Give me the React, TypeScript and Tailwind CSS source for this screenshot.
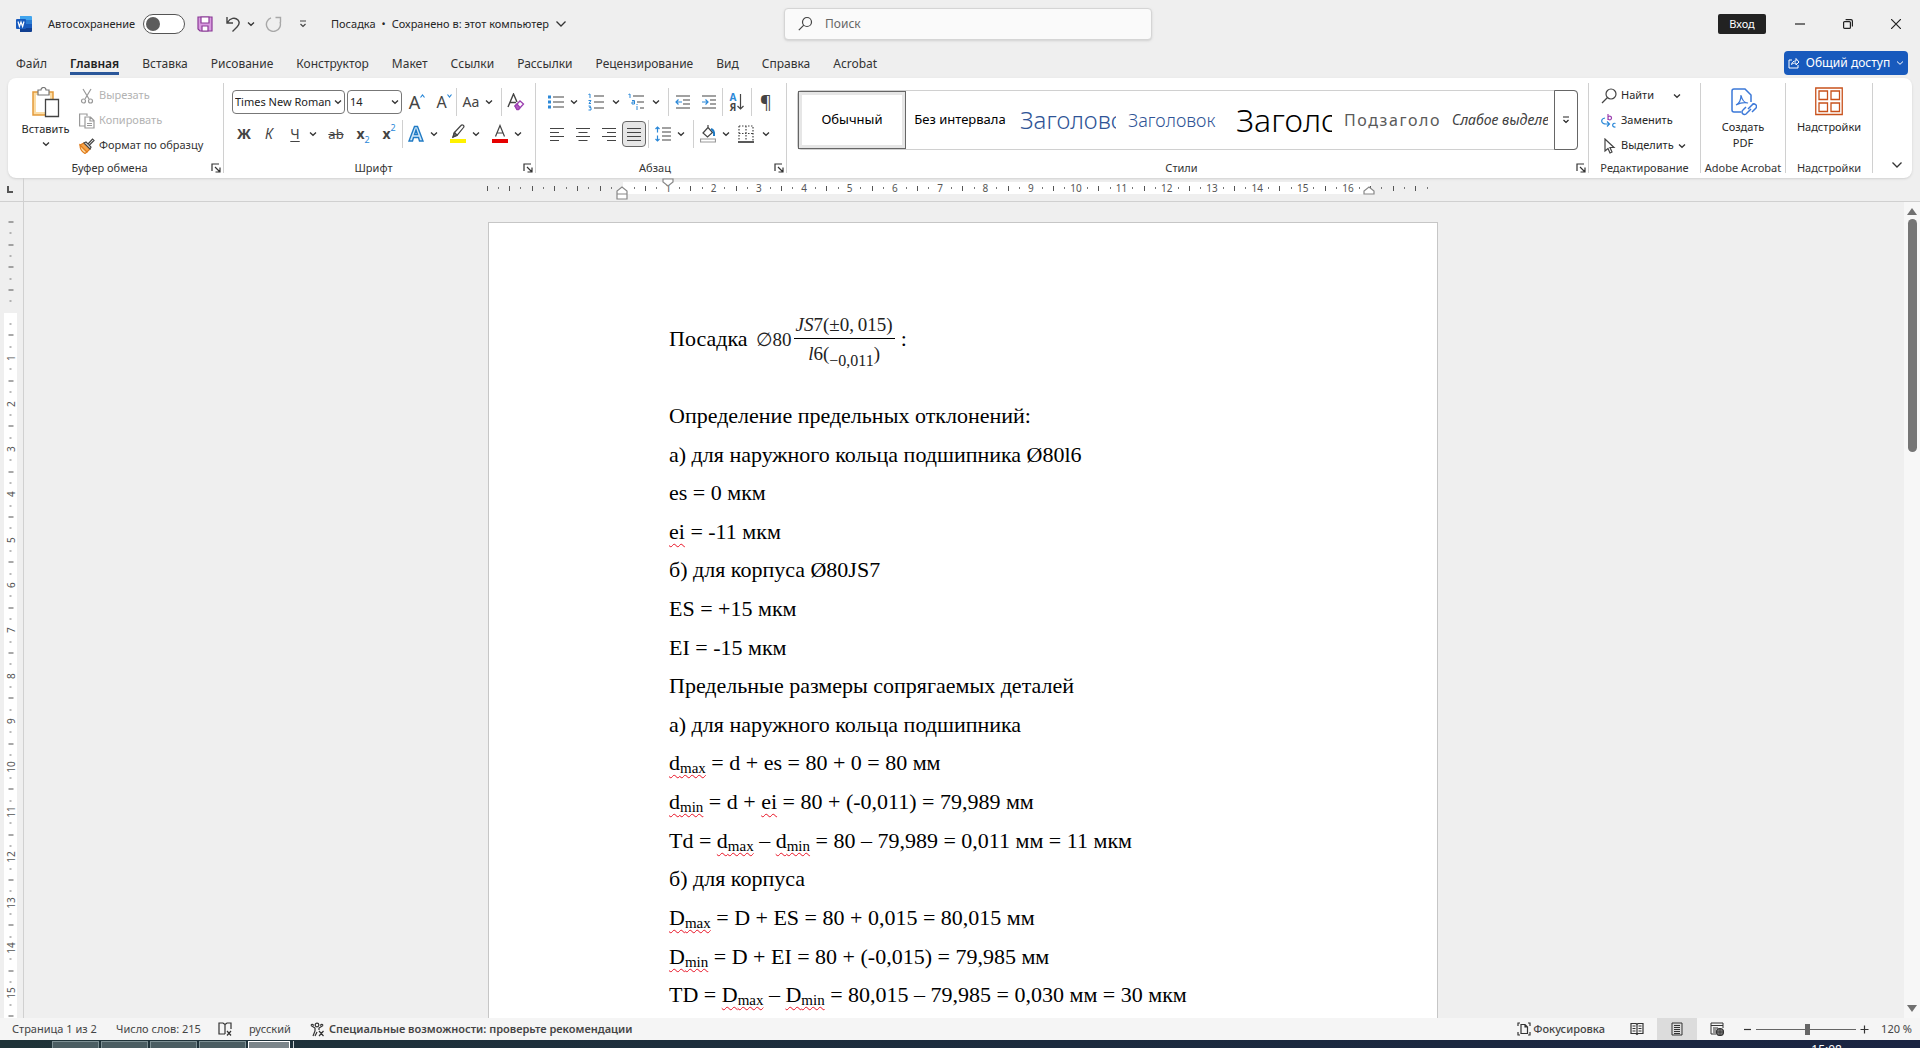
import { useState } from "react";
import type { ReactNode } from "react";

const TABS = [
  "Файл", "Главная", "Вставка", "Рисование", "Конструктор", "Макет", "Ссылки",
  "Рассылки", "Рецензирование", "Вид", "Справка", "Acrobat",
];

const STYLES = [
  { id: "normal", name: "Обычный", cls: "text-[13px] text-black justify-center" },
  { id: "nospace", name: "Без интервала", cls: "text-[13px] text-black justify-center" },
  { id: "h1", name: "Заголовок", cls: "text-2xl font-light text-[#2f5496]" },
  { id: "h2", name: "Заголовок", cls: "text-lg font-light text-[#2f5496]" },
  { id: "title", name: "Заголовок", cls: "text-[32px] font-light text-black" },
  { id: "subtitle", name: "Подзаголовок", cls: "text-base tracking-widest text-[#5a5a5a]" },
  { id: "subtle", name: "Слабое выделение", cls: "text-sm italic text-[#404040]" },
];

/* ── small shared pieces ── */

function Icon({ w = 16, h = 16, children }: { w?: number; h?: number; children: ReactNode }) {
  return (
    <svg width={w} height={h} viewBox={`0 0 ${w} ${h}`} fill="none" stroke="#444" strokeWidth="1.2" className="shrink-0" aria-hidden>
      {children}
    </svg>
  );
}

function Chevron({ big = false }: { big?: boolean }) {
  return big ? (
    <Icon w={12} h={8}><path d="M1.5 1.5 6 6l4.500-4.500" stroke="#333" strokeWidth="1.300" /></Icon>
  ) : (
    <Icon w={8} h={6}><path d="M1 1.500 4 4.300l3-2.800" stroke="#333" strokeWidth="1.300" /></Icon>
  );
}

function Tool({ label, w, children }: { label: string; w: string; children: ReactNode }) {
  return (
    <button aria-label={label} className={`flex h-6 shrink-0 items-center justify-center ${w}`}>
      {children}
    </button>
  );
}

const More = ({ w }: { w: string }) => <Tool label="Ещё" w={w}><Chevron /></Tool>;

const Sep = () => <span className="h-7 w-px shrink-0 bg-[#d0d0d0]" />;

function Group({ title, width, launcher, children }: { title: string; width: string; launcher?: boolean; children: ReactNode }) {
  return (
    <section aria-label={title} className={`flex flex-col justify-between border-r border-[#d0d0d0] ${width}`}>
      {children}
      <div className="flex h-[11px] items-center">
        <span className="grow whitespace-nowrap text-center text-[11px] leading-3 text-[#333]">{title}</span>
        {launcher && (
          <button aria-label={`Параметры: ${title}`} className="mr-0.5">
            <Icon w={10} h={10}><path d="M1 8V1h7M4 4l4.500 4.500M9 4.500V9H4.500" stroke="#333" /></Icon>
          </button>
        )}
      </div>
    </section>
  );
}

/* ── title bar ── */

function TitleBar() {
  return (
    <header className="grid h-12 shrink-0 grid-cols-[1fr_368px_1fr] items-center pl-4 text-[11px] text-[#262626]">
      <div className="flex items-center">
        <Icon>
          <path d="M4 0h11a1 1 0 0 1 1 1v4H4z" fill="#41a5ee" stroke="none" />
          <path d="M4 4h12v4H4z" fill="#2b7cd3" stroke="none" />
          <path d="M4 8h12v4H4z" fill="#185abd" stroke="none" />
          <path d="M4 12h12v3a1 1 0 0 1-1 1H4z" fill="#103f91" stroke="none" />
          <rect y="3" width="10" height="10" rx="1" fill="#185abd" stroke="none" />
          <path d="m2 5.500 1.400 5L5 6l1.600 4.500L8 5.500" stroke="#fff" />
        </Icon>
        <label htmlFor="autosave" className="ml-4 w-[95px]">Автосохранение</label>
        <span className="relative flex h-5 w-[42px] rounded-full border border-[#555] bg-white">
          <input id="autosave" type="checkbox" role="switch" className="absolute inset-0 appearance-none" />
          <span className="m-0.5 size-3.5 rounded-full bg-[#5c5c5c]" />
        </span>
        <button aria-label="Сохранить" className="ml-3">
          <Icon>
            <path d="M1 1h14v14H3l-2-2z" fill="#d99be0" stroke="#8a3a96" />
            <path d="M4 1h8v6H4zM5 10h6v5H5z" fill="#fff" stroke="#8a3a96" />
          </Icon>
        </button>
        <button aria-label="Отменить" className="ml-3 flex items-center gap-1.5">
          <Icon><path d="M2 1v6h6M2.500 6.500C5 2 10 1 13 4c2.500 3 1 5-1 7l-4.500 4.500" strokeWidth="1.400" /></Icon>
          <Chevron />
        </button>
        <button aria-label="Повторить" className="ml-2.5">
          <Icon w={18}><path d="M10.500 1.500h5v5M15 6A7 7 0 1 1 6 1.800" stroke="#a8a8a8" strokeWidth="1.400" /></Icon>
        </button>
        <button aria-label="Настройка панели" className="ml-4">
          <Icon w={8} h={8}><path d="M1 1h6M1.500 4 4 6.500 6.500 4" /></Icon>
        </button>
        <button className="ml-6 flex items-center gap-1.5 whitespace-nowrap">
          <span>Посадка</span><span>•</span><span>Сохранено в: этот компьютер</span> <Chevron big />
        </button>
      </div>
      <label className="flex h-8 items-center gap-3 rounded-sm border border-[#d5d5d5] bg-[#fafafa] px-3 shadow-sm">
        <Icon><circle cx="10" cy="6" r="4.500" /><path d="m6.800 9.200-5 5" /></Icon>
        <input aria-label="Поиск" placeholder="Поиск" className="grow bg-transparent text-xs outline-none placeholder:text-[#666]" />
      </label>
      <div className="flex items-center justify-end">
        <button className="mr-2.5 h-5 w-12 rounded-xs bg-[#222] text-[11px] text-white">Вход</button>
        <button aria-label="Свернуть" className="flex w-12 justify-center"><Icon w={10} h={10}><path d="M0 5h10" stroke="#222" /></Icon></button>
        <button aria-label="Развернуть" className="flex w-12 justify-center">
          <Icon w={10} h={10}><rect x=".6" y="2.600" width="6.800" height="6.800" rx="1" stroke="#222" /><path d="M2.600.600H8A1.500 1.500 0 0 1 9.400 2v5.400" stroke="#222" /></Icon>
        </button>
        <button aria-label="Закрыть" className="flex w-12 justify-center"><Icon w={10} h={10}><path d="m0 0 10 10M10 0 0 10" stroke="#222" /></Icon></button>
      </div>
    </header>
  );
}

function TabBar() {
  const [active, setActive] = useState("Главная");
  return (
    <nav className="flex h-[30px] shrink-0 items-start justify-between pl-[5px] pr-3">
      <div className="flex gap-px">
        {TABS.map((t) => (
          <button key={t} onClick={() => setActive(t)} className="px-[11px] pt-1 text-xs text-[#333]">
            <span className={`block h-[23px] leading-[23px] ${t === active ? "border-b-[3px] border-[#2b579a] font-semibold text-[#222]" : ""}`}>{t}</span>
          </button>
        ))}
      </div>
      <button className="mt-[3px] flex h-6 w-[124px] items-center justify-center gap-1.5 rounded-sm bg-[#185abd] text-xs text-white">
        <Icon w={12} h={12}><path d="M4 3H1v8h9V8M3.500 7.500C4 5 5.500 4 8 4V1.500L11 5 8 8V6C6 6 4.500 6.500 3.500 7.500z" stroke="#fff" strokeWidth="1" /></Icon>
        Общий доступ
        <svg width="8" height="6" viewBox="0 0 8 6" fill="none" stroke="#fff"><path d="m1 1.500 3 2.800 3-2.800" /></svg>
      </button>
    </nav>
  );
}

/* ── ribbon groups ── */

function Clipboard() {
  return (
    <Group title="Буфер обмена" width="w-[216px]" launcher>
      <div className="flex">
        <button className="flex w-[71px] flex-col items-center pl-1 pt-1 text-[11px]">
          <Icon w={30} h={32}>
            <path d="M2 5h20v23H2z" fill="#fbdca5" stroke="#e39a3b" strokeWidth="1.500" />
            <path d="M5 8h14v17H5z" fill="#fff" stroke="none" />
            <path d="M7 3h3a2.500 2.500 0 0 1 5 0h3v5H7z" fill="#fff" stroke="#777" />
            <path d="M14.500 12.500h13v17h-13z" fill="#fff" stroke="#444" strokeWidth="1.300" />
          </Icon>
          <span className="leading-5">Вставить</span>
          <span className="mt-0.5"><Chevron /></span>
        </button>
        <div className="flex flex-col text-[11px]">
          <button disabled className="flex h-[25px] items-center gap-1 text-[#b3b3b3]">
            <Icon><path d="m4 1 6 10M12 1 6 11" stroke="#999" /><circle cx="4.500" cy="13" r="2" stroke="#999" /><circle cx="11.500" cy="13" r="2" stroke="#999" /></Icon>
            Вырезать
          </button>
          <button disabled className="flex h-[25px] items-center gap-1 text-[#b3b3b3]">
            <Icon><path d="M6 13H.600V1H8v2M6 4h5.500l3.500 3.500V15H6zM11 4v4h4M8 10.500h5M8 12.500h5" stroke="#999" /></Icon>
            Копировать
          </button>
          <button className="flex h-[25px] items-center gap-1 text-[#333]">
            <Icon>
              <path d="m1 7 7 7-2 1.500C3 14 1 11 1 7z" fill="#fbdca5" stroke="#e07b1a" />
              <path d="m1 7 4-2 6 6-3 3z" fill="#f6a34a" stroke="#e07b1a" />
              <path d="m5 5 2-1 5 5-1 2zM9 6l4.500-5L15 2.500 10.500 7" fill="#fff" />
            </Icon>
            Формат по образцу
          </button>
        </div>
      </div>
    </Group>
  );
}

function Combo({ label, value, width }: { label: string; value: string; width: string }) {
  return (
    <span className={`relative flex h-6 items-center rounded-sm border border-[#777] bg-white ${width}`}>
      <select aria-label={label} className="w-full appearance-none overflow-hidden bg-transparent pl-0.5 pr-3 text-[11px] text-[#222] outline-none">
        <option>{value}</option>
      </select>
      <span className="pointer-events-none absolute right-0.5"><Chevron /></span>
    </span>
  );
}

function FontGroup() {
  return (
    <Group title="Шрифт" width="w-[312px]" launcher>
      <div className="flex flex-col gap-1 pl-2 pt-[5px] text-[#444]">
        <div className="flex h-7 items-center">
          <Combo label="Шрифт" value="Times New Roman" width="w-[113px]" />
          <span className="w-0.5" />
          <Combo label="Размер" value="14" width="w-[55px]" />
          <Tool label="Увеличить" w="w-[30px]"><span className="text-lg">A</span><span className="mb-3"><Icon w={5} h={4}><path d="m.500 3.500 2-2.500 2 2.500" stroke="#2b88d8" /></Icon></span></Tool>
          <Tool label="Уменьшить" w="w-6"><span className="text-base">A</span><span className="mb-3"><Icon w={5} h={4}><path d="m.500.500 2 2.500 2-2.500" stroke="#2b88d8" /></Icon></span></Tool>
          <Sep />
          <Tool label="Регистр" w="w-7"><span className="text-sm">Aa</span></Tool>
          <More w="w-2" />
          <span className="w-2" />
          <Sep />
          <Tool label="Очистить формат" w="w-[27px]">
            <Icon w={18} h={18}>
              <path d="m1 14 5.500-13L10 9M3 9.500h6" strokeWidth="1.400" />
              <path d="m8 13 5-5 3.500 3-5 5.500h-1.500z" fill="#fff" stroke="#9b3fb0" strokeWidth="1.300" />
              <path d="m8 13 2-2 3 3.500-1.500 2h-1.500z" fill="#b55cc6" stroke="#9b3fb0" />
            </Icon>
          </Tool>
        </div>
        <div className="flex h-7 items-center text-sm">
          <Tool label="Полужирный" w="w-6"><b>Ж</b></Tool>
          <Tool label="Курсив" w="w-[26px]"><i>К</i></Tool>
          <Tool label="Подчёркнутый" w="w-[26px]"><u className="underline-offset-2">Ч</u></Tool>
          <More w="w-[10px]" />
          <span className="w-1" />
          <Tool label="Зачёркнутый" w="w-7"><s className="text-[13px]">ab</s></Tool>
          <Tool label="Подстрочный" w="w-[26px]"><b>x</b><span className="mt-3 text-[9px] text-[#2b88d8]">2</span></Tool>
          <Tool label="Надстрочный" w="w-[26px]"><b>x</b><span className="mb-3 text-[9px] text-[#2b88d8]">2</span></Tool>
          <Sep />
          <Tool label="Эффекты" w="w-[26px]">
            <Icon w={16} h={18}><path d="M1 16 6.500 1.500h3L15 16h-3.500l-1-3.500h-5l-1 3.500zM6.500 9.500h3L8 5z" fill="#cfe6f8" stroke="#1f7ac4" strokeWidth="1.400" /></Icon>
          </Tool>
          <More w="w-[10px]" />
          <span className="w-1.5" />
          <Tool label="Цвет выделения" w="w-[26px]">
            <Icon w={16} h={20}><path d="m4 9 7-7.500a1.500 1.500 0 0 1 2.500 2L7 11.500 3 13z" /><path d="M4.500 8.500 7 11l-4 2z" fill="#777" /><path d="M0 15h16v4H0z" fill="#fff200" stroke="none" /></Icon>
          </Tool>
          <More w="w-[10px]" />
          <span className="w-1.5" />
          <Tool label="Цвет текста" w="w-[26px]">
            <Icon w={16} h={20}><path d="M3.500 12.500 8 1.500l4.500 11M5 9h6" /><path d="M0 15h16v4H0z" fill="#e60000" stroke="none" /></Icon>
          </Tool>
          <More w="w-[10px]" />
        </div>
      </div>
    </Group>
  );
}

const ALIGN = [
  { label: "По левому краю", d: "M0 1.500h14M0 5.500h9M0 9.500h14M0 13.500h9" },
  { label: "По центру", d: "M0 1.500h14M2.500 5.500h9M0 9.500h14M2.500 13.500h9" },
  { label: "По правому краю", d: "M0 1.500h14M5 5.500h9M0 9.500h14M5 13.500h9" },
];

function Paragraph() {
  return (
    <Group title="Абзац" width="w-[251px]" launcher>
      <div className="flex flex-col gap-1 pl-2 pt-[5px]">
        <div className="flex h-7 items-center">
          <Tool label="Маркеры" w="w-6">
            <Icon><path d="M5 3h11M5 8h11M5 13h11" /><path d="M0 1.500h3v3H0zM0 6.500h3v3H0zM0 11.500h3v3H0z" fill="#2b88d8" stroke="none" /></Icon>
          </Tool>
          <More w="w-3" />
          <Tool label="Нумерация" w="w-8">
            <Icon h={18}><path d="M6 3h10M6 9h10M6 15h10" /><path d="M.500 1.500 2 1v4M.500 7.500H3L1 10.500h2M.500 13h2l-1 1.500h1.500V17H.500" stroke="#2b88d8" strokeWidth="1" /></Icon>
          </Tool>
          <More w="w-2" />
          <Tool label="Многоуровневый список" w="w-8">
            <Icon h={18}><path d="M5 3h11M9 9h7M12 15h4" /><path d="M.500 1.500 2 1v4M4 7.500h2.500V11H4V9h2.500M9 13v4M9 11v1" stroke="#2b88d8" strokeWidth="1" /></Icon>
          </Tool>
          <More w="w-2" />
          <span className="w-2" />
          <Sep />
          <Tool label="Уменьшить отступ" w="w-7">
            <Icon><path d="M1 2h14M8 6h7M8 10h7M1 14h14" /><path d="M7 8H1M3.500 5.500 1 8l2.500 2.500" stroke="#2b88d8" /></Icon>
          </Tool>
          <Tool label="Увеличить отступ" w="w-6">
            <Icon><path d="M1 2h14M9 6h6M9 10h6M1 14h14" /><path d="M1 8h6M4.500 5.500 7 8l-2.500 2.500" stroke="#2b88d8" /></Icon>
          </Tool>
          <span className="w-px" />
          <Sep />
          <Tool label="Сортировка" w="w-7">
            <span className="flex flex-col text-[10px] font-bold leading-[10px] text-[#444]"><span className="text-[#2b88d8]">А</span>Я</span>
            <Icon w={8} h={18}><path d="M4.500 1v15M1.500 13l3 3 3-3" /></Icon>
          </Tool>
          <Sep />
          <Tool label="Знаки абзаца" w="w-7"><span className="text-lg text-[#444]">¶</span></Tool>
        </div>
        <div className="flex h-7 items-center">
          {ALIGN.map((a) => (
            <Tool key={a.label} label={a.label} w="w-[26px]"><Icon w={14} h={15}><path d={a.d} /></Icon></Tool>
          ))}
          <span className="flex rounded-sm border border-[#666] bg-[#e6e6e6]">
            <Tool label="По ширине" w="w-[22px]"><Icon w={14} h={15}><path d="M0 1.500h14M0 5.500h14M0 9.500h14M0 13.500h14" /></Icon></Tool>
          </span>
          <span className="w-0.5" />
          <Sep />
          <Tool label="Интервал" w="w-7">
            <Icon><path d="M7 2h9M7 6h9M7 10h9M7 14h9" /><path d="M2.500 1v5.500M.500 3l2-2 2 2M2.500 15V9.500M.500 13l2 2 2-2" stroke="#2b88d8" /></Icon>
          </Tool>
          <More w="w-2" />
          <span className="w-2" />
          <Sep />
          <Tool label="Заливка" w="w-7">
            <Icon h={18}><path d="m3 8 5-5.500 4.500 5L7.500 12zM8 2.500V0" /><path d="M11 4c3 1 3.500 3 3 7" stroke="#1f7ac4" strokeWidth="2" /><path d="M.500 14h15v3H.500z" stroke="#999" /></Icon>
          </Tool>
          <More w="w-2" />
          <Tool label="Границы" w="w-8">
            <Icon h={18}><path d="M1 1h14v15M1 1v15M8 1v15M1 8.500h14" strokeDasharray="1.500 1.500" /><path d="M0 17h16" stroke="#222" strokeWidth="1.500" /></Icon>
          </Tool>
          <More w="w-2" />
        </div>
      </div>
    </Group>
  );
}

function StylesGroup() {
  const [sel, setSel] = useState("normal");
  return (
    <Group title="Стили" width="min-w-0 grow" launcher>
      <div className="mx-[10px] mt-[7px] flex h-[60px] rounded-sm border border-[#d0d0d0]">
        <div className="flex min-w-0 grow overflow-hidden">
          {STYLES.map((s) => (
            <button
              key={s.id}
              onClick={() => setSel(s.id)}
              className={`flex w-[108px] shrink-0 items-center justify-center ${s.id === sel ? "border border-[#666] shadow-[inset_0_0_0_3px_#e6e6e6]" : ""}`}
            >
              <span className={`flex w-24 overflow-hidden whitespace-nowrap ${s.cls}`}>{s.name}</span>
            </button>
          ))}
        </div>
        <button aria-label="Дополнительные стили" className="-my-px -mr-px flex w-6 items-center justify-center rounded-r-sm border border-[#666]">
          <Icon w={8} h={8}><path d="M1 1h6M1.500 4 4 6.500 6.500 4" stroke="#222" /></Icon>
        </button>
      </div>
    </Group>
  );
}

function Ribbon() {
  return (
    <div className="mx-2 flex h-[100px] shrink-0 rounded-lg bg-white py-[5px] text-[#262626] shadow-sm">
      <Clipboard />
      <FontGroup />
      <Paragraph />
      <StylesGroup />
      <Group title="Редактирование" width="w-[112px]">
        <div className="flex flex-col pl-3 text-[11px]">
          <button className="flex h-[25px] items-center gap-1">
            <Icon><circle cx="10" cy="6" r="5" /><path d="M6.500 9.500 1 15" /></Icon>
            <span className="w-12 text-left">Найти</span><Chevron />
          </button>
          <button className="flex h-[25px] items-center gap-1">
            <Icon><path d="M7 1v6M7 4.500a1.800 1.800 0 1 1 0 1" stroke="#9b3fb0" /><path d="M14.500 10.500c-3-1.500-4.500 4 0 3.500" stroke="#2b88d8" /><path d="M4 5c-5 1-4 6 1 6h3M6 8.500 8.500 11 6 13.500" stroke="#2b88d8" /></Icon>
            Заменить
          </button>
          <button className="flex h-[25px] items-center gap-1">
            <Icon><path d="M4 1v12l3-2.500 2 4.500 2-1-2-4.500h4z" /></Icon>
            Выделить <Chevron />
          </button>
        </div>
      </Group>
      <Group title="Adobe Acrobat" width="w-[85px]">
        <button className="flex flex-col items-center pt-1 text-[11px] leading-4">
          <Icon w={28} h={32}>
            <path d="M12 25H5a2 2 0 0 1-2-2V4a2 2 0 0 1 2-2h11l6 6v7" stroke="#3b78d8" strokeWidth="1.500" />
            <path d="M7 18c4-2 5-6 5-10 1 5 3 8 7 8-4-1-8 0-12 2z" stroke="#3b78d8" />
            <path d="m19 22 4-4a2.500 2.500 0 0 1 4 3l-4 4M22 22l-5 5a2.500 2.500 0 0 1-3-4l3-3" stroke="#3b78d8" strokeWidth="1.500" />
          </Icon>
          <span>Создать<br />PDF</span>
        </button>
      </Group>
      <Group title="Надстройки" width="w-[87px]">
        <button className="flex flex-col items-center pt-1 text-[11px] leading-4">
          <Icon w={28} h={32}>
            <path d="M.750 1h26.500v26.500H.750z" stroke="#c8511b" strokeWidth="1.300" />
            <path d="M4 4h8.500v8.500H4zM16 4h8.500v8.500H16zM4 16h8.500v8.500H4zM16 16h8.500v8.500H16z" stroke="#c8511b" strokeWidth="1.300" />
          </Icon>
          <span>Надстройки</span>
        </button>
      </Group>
      <button aria-label="Свернуть ленту" className="flex w-[39px] items-end justify-center pb-1 pl-2"><Chevron big /></button>
    </div>
  );
}

/* ── rulers: four cells per centimetre, mark on the leading edge of each cell ── */

function Mark({ quarter }: { quarter: number }) {
  const n = quarter / 4;
  if (quarter > 0 && quarter < 66 && quarter % 4 === 0) return <>{n}</>;
  if (quarter === 0) return null;
  return <span className={`w-px shrink-0 ${quarter % 2 === 0 ? "h-[5px] bg-[#555]" : "h-0.5 bg-[#777]"}`} />;
}

function HRuler() {
  const cells = Array.from({ length: 84 }, (_, i) => i - 12);
  return (
    <div className="flex h-6 shrink-0 border-b border-[#d0d0d0] text-[10px] text-[#555]">
      <div className="flex w-6 shrink-0 justify-center border-r border-[#d0d0d0] pr-1 pt-2">
        <Icon w={6} h={7}><path d="M1 0v6h5" stroke="#555" strokeWidth="2" /></Icon>
      </div>
      <div className="flex grow justify-center pr-[18px]">
        <div className="relative mt-1 flex h-3 w-[952px]">
          {cells.map((q) => (
            <span key={q} className={`flex flex-1 ${q >= 0 && q < 66 ? "bg-white" : ""}`}>
              <span className="flex w-0 items-center justify-center"><Mark quarter={q} /></span>
            </span>
          ))}
          <span className="absolute left-[129px] top-1"><Icon w={12} h={15}><path d="M1 8V5l5-4 5 4v3zM1 8h10v5H1z" fill="#fff" stroke="#888" /></Icon></span>
          <span className="absolute -top-1 left-[175px]"><Icon w={12} h={9}><path d="M1 1h10v3L6 8 1 4z" fill="#fff" stroke="#888" /></Icon></span>
          <span className="absolute left-[876px] top-1"><Icon w={12} h={9}><path d="M1 8V5l5-4 5 4v3z" fill="#fff" stroke="#888" /></Icon></span>
        </div>
      </div>
    </div>
  );
}

function VRuler() {
  const cells = Array.from({ length: 71 }, (_, i) => i - 8);
  return (
    <div className="w-6 shrink-0 overflow-hidden border-r border-[#d0d0d0] pl-1 pt-5 text-[10px] text-[#555]">
      <div className="flex h-[805px] w-[13px] flex-col">
        {cells.map((q) => (
          <span key={q} className={`flex flex-1 flex-col ${q >= 0 ? "bg-white" : ""}`}>
            <span className="flex h-0 -rotate-90 items-center justify-center"><Mark quarter={q} /></span>
          </span>
        ))}
      </div>
    </div>
  );
}

/* ── document ── */

const Err = ({ children }: { children: ReactNode }) => (
  <span className="underline decoration-[#e81123] decoration-wavy decoration-1 underline-offset-4">{children}</span>
);

const V = ({ s, i }: { s: string; i: string }) => (
  <Err>{s}<sub className="bottom-0 align-[-3px] text-[15px] leading-none">{i}</sub></Err>
);

function Page() {
  return (
    <article className="h-full w-[950px] shrink-0 overflow-hidden border border-b-0 border-[#c6c6c6] bg-white pl-[180px] pt-[87px] font-['Liberation_Serif','Times_New_Roman',serif] text-[22px] leading-[1.755] text-black">
      <div className="mb-[29px] flex h-[58px] items-center">
        Посадка
        <span className="ml-2 flex items-center gap-0.5 text-[19px] leading-none text-[#222]">
          <span>∅80</span>
          <span className="flex flex-col items-center">
            <span className="flex h-7 items-center border-b border-black px-0.5"><i>JS</i>7(±0,&#8201;015)</span>
            <span className="flex h-7 items-center"><i>l</i>6(<sub className="bottom-0 mt-4 text-base leading-none">−0,011</sub>)</span>
          </span>
        </span>
        <span className="ml-1.5">:</span>
      </div>
      <p>Определение предельных отклонений:</p>
      <p>а) для наружного кольца подшипника Ø80l6</p>
      <p>es = 0 мкм</p>
      <p><Err>ei</Err> = -11 мкм</p>
      <p>б) для корпуса Ø80JS7</p>
      <p>ES = +15 мкм</p>
      <p>EI = -15 мкм</p>
      <p>Предельные размеры сопрягаемых деталей</p>
      <p>а) для наружного кольца подшипника</p>
      <p><V s="d" i="max" /> = d + es = 80 + 0 = 80 мм</p>
      <p><V s="d" i="min" /> = d + <Err>ei</Err> = 80 + (-0,011) = 79,989 мм</p>
      <p>Td = <V s="d" i="max" /> – <V s="d" i="min" /> = 80 – 79,989 = 0,011 мм = 11 мкм</p>
      <p>б) для корпуса</p>
      <p><V s="D" i="max" /> = D + ES = 80 + 0,015 = 80,015 мм</p>
      <p><V s="D" i="min" /> = D + EI = 80 + (-0,015) = 79,985 мм</p>
      <p>TD = <V s="D" i="max" /> – <V s="D" i="min" /> = 80,015 – 79,985 = 0,030 мм = 30 мкм</p>
    </article>
  );
}

function StatusBar() {
  const [zoom, setZoom] = useState(52);
  return (
    <footer className="flex h-[22px] shrink-0 items-center bg-[#f5f5f5] pl-3 pr-2 text-[11px] text-[#444]">
      <span className="w-[104px] whitespace-nowrap">Страница 1 из 2</span>
      <span className="w-[102px] whitespace-nowrap">Число слов: 215</span>
      <Icon w={14} h={14}><path d="M7 12H1V1h4l2 1.500V12M7 2.500 9 1h4v6M9 9l4 4.500M13 9l-4 4.500" stroke="#333" /></Icon>
      <span className="ml-[17px] w-[61px]">русский</span>
      <Icon w={15} h={15}><circle cx="7" cy="3" r="1.800" stroke="#333" /><path d="M1 3.500 5 6v3l-2 5M13 3.500 9 6v2M1 3.500c.500-2 2-1 3 0M13 3.500c-.500-2-2-1-3 0M9 9l4.500 5M13.500 9 9 14M5 14l2-4" stroke="#333" /></Icon>
      <span className="ml-1 whitespace-nowrap font-semibold">Специальные возможности: проверьте рекомендации</span>
      <div className="ml-auto flex items-center self-stretch">
        <button className="mr-3 flex items-center gap-0.5 font-medium">
          <Icon w={14} h={14}><path d="M1 4V1h2M11 1h2v3M13 10v3h-2M3 13H1v-3M4 2.500h4L10.500 5v6.500H4zM8 2.500V5h2.500" stroke="#333" /></Icon>
          Фокусировка
        </button>
        <button aria-label="Режим чтения" className="flex w-10 justify-center">
          <Icon w={14} h={14}><path d="M7 2.500 6 1.500H1v10h5l1 1 1-1h5v-10H8zV12.500M2.500 4h3M2.500 6.500h3M2.500 9h3M8.500 4h3M8.500 6.500h3M8.500 9h3" stroke="#333" /></Icon>
        </button>
        <button aria-label="Разметка страницы" className="flex w-10 items-center justify-center self-stretch bg-[#dcdcdc]">
          <Icon w={12} h={14}><path d="M1 1h10v12H1zM3 3.500h6M3 5.500h6M3 7.500h6M3 9.500h6M3 11.500h6" stroke="#333" strokeWidth="1" /></Icon>
        </button>
        <button aria-label="Веб-документ" className="flex w-10 justify-center">
          <Icon w={14} h={14}><path d="M6 12H1V1h12v5M1 3.500h12M3 6h5M3 8h3M3 10h3" stroke="#333" strokeWidth="1" /><circle cx="10" cy="10" r="3.500" fill="#777" stroke="#333" /><path d="M6.500 10h7M10 6.500v7" stroke="#333" strokeWidth=".800" /></Icon>
        </button>
        <button aria-label="Уменьшить масштаб" className="ml-1.5 mr-1"><Icon w={9} h={9}><path d="M1 4.500h7" stroke="#333" /></Icon></button>
        <input
          type="range"
          aria-label="Масштаб"
          value={zoom}
          onChange={(e) => setZoom(Number(e.target.value))}
          className="h-3 w-[100px] appearance-none bg-transparent [&::-webkit-slider-runnable-track]:h-px [&::-webkit-slider-runnable-track]:bg-[#666] [&::-webkit-slider-thumb]:-mt-[5px] [&::-webkit-slider-thumb]:h-[11px] [&::-webkit-slider-thumb]:w-[5px] [&::-webkit-slider-thumb]:appearance-none [&::-webkit-slider-thumb]:bg-[#666]"
        />
        <button aria-label="Увеличить масштаб" className="ml-1"><Icon w={9} h={9}><path d="M.500 4.500h8M4.500.500v8" stroke="#333" /></Icon></button>
        <span className="w-[43px] whitespace-nowrap text-right">120 %</span>
      </div>
    </footer>
  );
}

function Taskbar() {
  return (
    <div className="flex h-2 shrink-0 overflow-hidden bg-linear-to-r from-[#1f3338] to-[#1a2442] pl-[52px]">
      {[1, 2, 3, 4].map((n) => (
        <span key={n} className="mr-0.5 mt-px h-4 w-[47px] border border-[#7d9094] bg-[#4a5d62]" />
      ))}
      <span className="mt-px h-4 w-[42px] border border-white bg-[#7b858a]" />
      <span className="mt-px h-4 w-1 border-r border-[#c9d0d3]" />
      <span className="ml-auto mr-[78px] pt-0.5 text-xs leading-4 text-white">15:08</span>
    </div>
  );
}

export default function App() {
  return (
    <div className="flex h-screen flex-col overflow-hidden bg-[#efefef] font-['Noto_Sans','Open_Sans',sans-serif]">
      <TitleBar />
      <TabBar />
      <Ribbon />
      <HRuler />
      <main className="flex min-h-0 grow">
        <VRuler />
        <div className="flex min-w-0 grow justify-center overflow-hidden pr-0.5 pt-5">
          <Page />
        </div>
        <div className="flex w-4 shrink-0 flex-col items-center justify-between bg-[#f7f7f7] py-1.5">
          <div className="flex flex-col items-center gap-1">
            <Icon w={10} h={7}><path d="m5 0 5 7H0z" fill="#707070" stroke="none" /></Icon>
            <span className="h-[233px] w-[9px] rounded-full bg-[#757575]" />
          </div>
          <Icon w={10} h={7}><path d="M0 0h10L5 7z" fill="#707070" stroke="none" /></Icon>
        </div>
      </main>
      <StatusBar />
      <Taskbar />
    </div>
  );
}
